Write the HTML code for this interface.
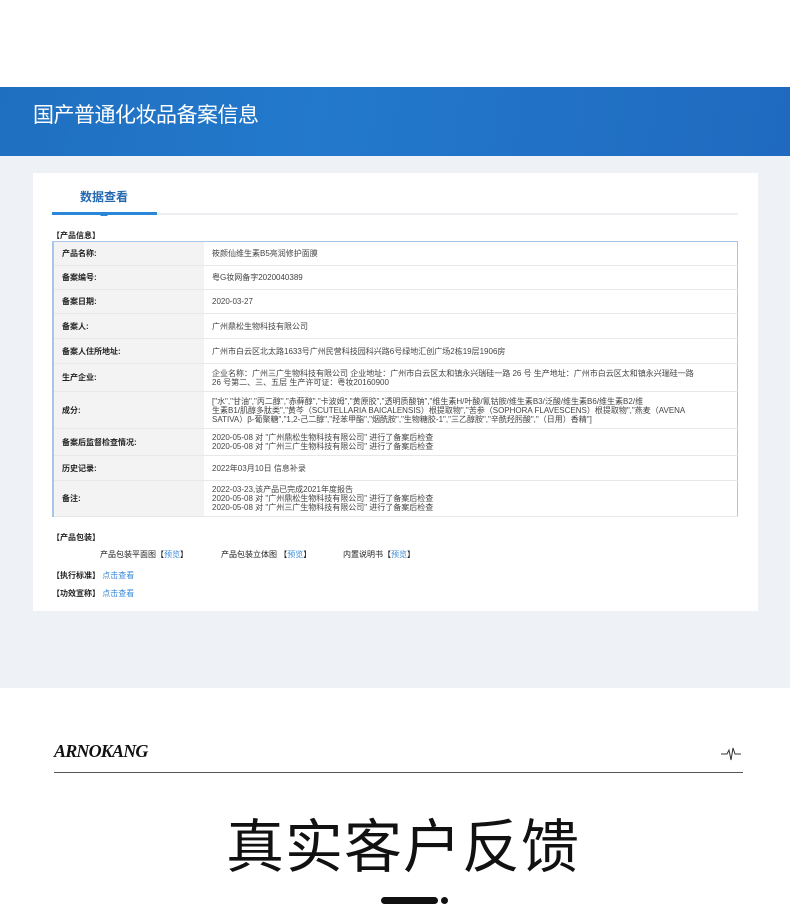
<!DOCTYPE html>
<html><head><meta charset="utf-8"><style>
*{margin:0;padding:0;box-sizing:border-box}
body{width:790px;height:914px;background:#fff;font-family:"Liberation Sans","Noto Sans CJK SC",sans-serif;position:relative;overflow:hidden}
.band{position:absolute;left:0;top:87px;width:790px;height:69px;background:linear-gradient(100deg,#1f6fc0 0%,#2379cc 40%,#1f6ac0 100%)}
.band span{position:absolute;left:33px;top:12px;color:#fff;font-size:21px;letter-spacing:-0.5px}
.gray{position:absolute;left:0;top:156px;width:790px;height:532px;background:#eef2f6}
.card{position:absolute;left:33px;top:173px;width:725px;height:438px;background:#fff}
.tab{position:absolute;left:47px;top:15px;font-size:12px;font-weight:bold;color:#2468b0}
.tl{position:absolute;left:19px;top:40px;width:686px;height:2px;background:#eceef1}
.tb{position:absolute;left:19px;top:39px;width:105px;height:3px;background:#2a86d6}
.tri{position:absolute;left:67px;top:35px;border:4px solid transparent;border-bottom-color:#2a86d6}
.sec{position:absolute;font-size:8px;font-weight:bold;color:#222}
table{position:absolute;left:19px;top:68px;width:686px;border-collapse:collapse;border:1px solid #a9c6ea;border-left:2px solid #a9c6ea;font-size:8px;color:#444}
td{border-bottom:1px solid #e8e8e8;padding:0 8px;line-height:9px}
td.l{width:151px;background:#f3f3f3;font-weight:bold;color:#222}
.link{color:#3a8ad8}
.sm{position:absolute;font-size:8px;color:#222}
.brand{position:absolute;left:54px;top:741px;font-family:"Liberation Serif",serif;font-style:italic;font-weight:bold;font-size:18px;color:#111;letter-spacing:-0.8px}
.hl{position:absolute;left:54px;top:772px;width:689px;height:1px;background:#555}
.title{position:absolute;left:8px;width:790px;top:800px;text-align:center;font-size:58px;color:#111;letter-spacing:1px}
</style></head><body>
<div class="band"><span>国产普通化妆品备案信息</span></div>
<div class="gray"></div>
<div class="card">
<div class="tab">数据查看</div>
<div class="tl"></div><div class="tb"></div><div class="tri"></div>
<div class="sec" style="left:19px;top:57px">【产品信息】</div>
<table>
<tr style="height:24px"><td class="l">产品名称:</td><td>筱颜仙维生素B5亮润修护面膜</td></tr>
<tr style="height:24px"><td class="l">备案编号:</td><td>粤G妆网备字2020040389</td></tr>
<tr style="height:24px"><td class="l">备案日期:</td><td>2020-03-27</td></tr>
<tr style="height:25px"><td class="l">备案人:</td><td>广州鼎松生物科技有限公司</td></tr>
<tr style="height:25px"><td class="l">备案人住所地址:</td><td>广州市白云区北太路1633号广州民营科技园科兴路6号绿地汇创广场2栋19层1906房</td></tr>
<tr style="height:28px"><td class="l">生产企业:</td><td>企业名称：广州三广生物科技有限公司 企业地址：广州市白云区太和镇永兴瑞硅一路 26 号 生产地址：广州市白云区太和镇永兴瑞硅一路<br>26 号第二、三、五层 生产许可证：粤妆20160900</td></tr>
<tr style="height:37px"><td class="l">成分:</td><td>["水","甘油","丙二醇","赤藓醇","卡波姆","黄原胶","透明质酸钠","维生素H/叶酸/氰钴胺/维生素B3/泛酸/维生素B6/维生素B2/维<br>生素B1/肌醇多肽类","黄芩（SCUTELLARIA BAICALENSIS）根提取物","苦参（SOPHORA FLAVESCENS）根提取物","燕麦（AVENA<br>SATIVA）β-葡聚糖","1,2-己二醇","羟苯甲酯","烟酰胺","生物糖胶-1","三乙醇胺","辛酰羟肟酸","（日用）香精"]</td></tr>
<tr style="height:27px"><td class="l">备案后监督检查情况:</td><td>2020-05-08 对 "广州鼎松生物科技有限公司" 进行了备案后检查<br>2020-05-08 对 "广州三广生物科技有限公司" 进行了备案后检查</td></tr>
<tr style="height:25px"><td class="l">历史记录:</td><td>2022年03月10日 信息补录</td></tr>
<tr style="height:36px"><td class="l">备注:</td><td>2022-03-23,该产品已完成2021年度报告<br>2020-05-08 对 "广州鼎松生物科技有限公司" 进行了备案后检查<br>2020-05-08 对 "广州三广生物科技有限公司" 进行了备案后检查</td></tr>
</table>
<div class="sec" style="left:19px;top:359px">【产品包装】</div>
<div class="sm" style="left:67px;top:376px">产品包装平面图【<span class="link">预览</span>】</div>
<div class="sm" style="left:188px;top:376px">产品包装立体图 【<span class="link">预览</span>】</div>
<div class="sm" style="left:310px;top:376px">内置说明书【<span class="link">预览</span>】</div>
<div class="sec" style="left:19px;top:397px">【执行标准】 <span class="link" style="font-weight:normal">点击查看</span></div>
<div class="sec" style="left:19px;top:415px">【功效宣称】 <span class="link" style="font-weight:normal">点击查看</span></div>
</div>
<div class="brand">ARNOKANG</div>
<svg style="position:absolute;left:720px;top:745px" width="22" height="18" viewBox="0 0 22 18"><path d="M1 9H7L9 5L11 15L13 3L15 9H21" fill="none" stroke="#333" stroke-width="1"/></svg>
<div class="hl"></div>
<div class="title">真实客户反馈</div>
<div style="position:absolute;left:381px;top:897px;width:57px;height:7px;border-radius:4px;background:#111"></div>
<div style="position:absolute;left:441px;top:897px;width:7px;height:7px;border-radius:50%;background:#111"></div>
</body></html>
